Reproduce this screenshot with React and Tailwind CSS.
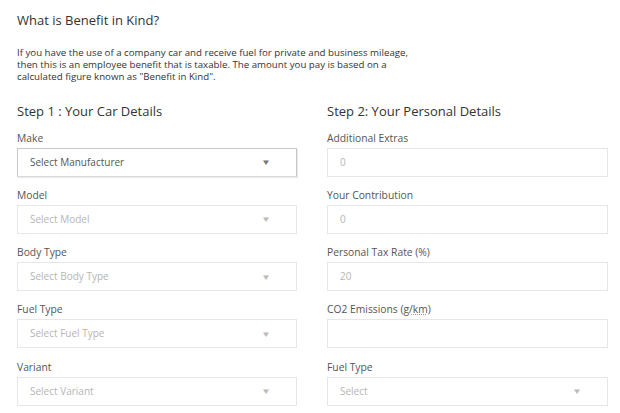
import React from "react";

const Arrow = ({ dark }) => (
  <span
    className={`text-[8px] leading-none scale-x-125 ${dark ? "text-[#777]" : "text-[#bbb]"}`}
  >
    ▼
  </span>
);

const SelectBox = ({ text, active }) => (
  <div
    className={`h-[29px] flex items-center justify-between pl-[12px] pr-[26px] bg-white border ${
      active
        ? "border-[#c8c8c8] border-b-[#dcdcdc] shadow-[1px_1px_0_#e8e8e8] text-[#555]"
        : "border-[#e6e6e6] text-[#b5b5b5]"
    }`}
  >
    <span className="text-[10px]">{text}</span>
    <Arrow dark={active} />
  </div>
);

const InputBox = ({ value }) => (
  <div className="h-[29px] flex items-center pl-[12px] bg-white border border-[#e6e6e6] text-[#b5b5b5] text-[10px]">
    {value}
  </div>
);

const Field = ({ label, children }) => (
  <div className="flex flex-col">
    <div className="text-[10.3px] text-[#555] h-[20px] leading-[18px]">
      {label}
    </div>
    <div className="mt-[-1px]">{children}</div>
  </div>
);

export default function App() {
  return (
    <div
      className="w-[620px] h-[413px] bg-white overflow-hidden px-[17px] text-[#333]"
      style={{ fontFamily: '"Open Sans", sans-serif' }}
    >
      <h1 className="pt-[10px] text-[13px] leading-[20px] text-[#333]">
        What is Benefit in Kind?
      </h1>
      <p className="mt-[17px] text-[9.7px] leading-[12px] text-[#333] w-[400px]">
        If you have the use of a company car and receive fuel for private and
        business mileage, then this is an employee benefit that is taxable. The
        amount you pay is based on a calculated figure known as "Benefit in
        Kind".
      </p>
      <div className="grid grid-cols-[280px_281px] gap-x-[30px] mt-[18px]">
        <div className="flex flex-col">
          <h2 className="text-[13px] leading-[20px] text-[#333] mb-[7.5px]">
            Step 1 : Your Car Details
          </h2>
          <div className="flex flex-col gap-[9.25px]">
            <Field label="Make">
              <SelectBox text="Select Manufacturer" active />
            </Field>
            <Field label="Model">
              <SelectBox text="Select Model" />
            </Field>
            <Field label="Body Type">
              <SelectBox text="Select Body Type" />
            </Field>
            <Field label="Fuel Type">
              <SelectBox text="Select Fuel Type" />
            </Field>
            <Field label="Variant">
              <SelectBox text="Select Variant" />
            </Field>
          </div>
        </div>
        <div className="flex flex-col">
          <h2 className="text-[13px] leading-[20px] text-[#333] mb-[7.5px]">
            Step 2: Your Personal Details
          </h2>
          <div className="flex flex-col gap-[9.25px]">
            <Field label="Additional Extras">
              <InputBox value="0" />
            </Field>
            <Field label="Your Contribution">
              <InputBox value="0" />
            </Field>
            <Field label="Personal Tax Rate (%)">
              <InputBox value="20" />
            </Field>
            <Field
              label={
                <>
                  CO2 Emissions (
                  <abbr className="underline decoration-dotted decoration-[#999]">
                    g/km
                  </abbr>
                  )
                </>
              }
            >
              <InputBox value="" />
            </Field>
            <Field label="Fuel Type">
              <SelectBox text="Select" />
            </Field>
          </div>
        </div>
      </div>
    </div>
  );
}
